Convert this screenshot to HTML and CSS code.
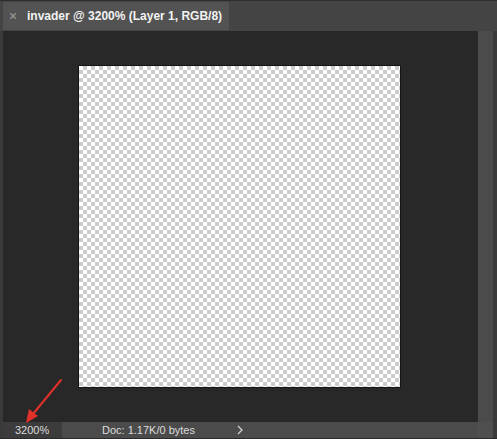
FILE: index.html
```html
<!DOCTYPE html>
<html>
<head>
<meta charset="utf-8">
<link rel="stylesheet" href="styles.css">
</head>
<body>
<div class="window">
  <div class="tabbar">
    <div class="tab">
      <span class="close">×</span>
      <span class="title">invader @ 3200% (Layer 1, RGB/8)</span>
    </div>
  </div>
  <div class="main">
    <div class="viewport">
      <div class="canvas"></div>
    </div>
    <div class="vscroll"></div>
  </div>
  <div class="statusbar">
    <div class="zoomfield">3200%</div>
    <div class="docinfo">
      <span class="doc">Doc: 1.17K/0 bytes</span>
      <svg class="more" width="6" height="10" viewBox="0 0 6 10"><polyline points="1,1 5,5 1,9" fill="none" stroke="#d0d0d0" stroke-width="1.3"/></svg>
    </div>
    <div class="corner"></div>
  </div>
  <svg class="arrow" width="80" height="60" viewBox="0 0 80 60">
    <line x1="61" y1="3" x2="33" y2="37" stroke="#e2302a" stroke-width="2" stroke-linecap="round"/>
    <polygon points="26,46 29,32 38,39" fill="#e2302a"/>
  </svg>
</div>
</body>
</html>
```
FILE: styles.css
```css
html, body {
  margin: 0;
  padding: 0;
  background: #2e2e2e;
}
.window {
  position: relative;
  width: 497px;
  height: 439px;
  display: flex;
  flex-direction: column;
  background: #333;
  font-family: "Liberation Sans", Arial, sans-serif;
  overflow: hidden;
}
.tabbar {
  height: 29px;
  border-top: 1px solid #2f2f2f;
  background: #444;
  padding-left: 3px;
  padding-top: 1px;
  box-sizing: content-box;
  display: flex;
  flex: none;
}
.tab {
  width: 226px;
  height: 28px;
  background: #535353;
  display: flex;
  align-items: center;
  color: #fff;
}
.close {
  width: 10px;
  margin-left: 6px;
  font-size: 14px;
  color: #a0a0a0;
  line-height: 1;
}
.title {
  margin-left: 8px;
  font-size: 12px;
  font-weight: bold;
  color: #f2f2f2;
  white-space: nowrap;
}
.main {
  flex: 1;
  display: flex;
  padding-left: 3px;
  padding-right: 4px;
  background: #3a3a3a;
  min-height: 0;
}
.viewport {
  flex: 1;
  background: #282828;
  display: flex;
  align-items: center;
  justify-content: center;
}
.canvas {
  width: 321px;
  height: 321px;
  background-color: #fff;
  background-image:
    linear-gradient(45deg, #cccccc 25%, transparent 25%, transparent 75%, #cccccc 75%),
    linear-gradient(45deg, #cccccc 25%, transparent 25%, transparent 75%, #cccccc 75%);
  background-size: 8px 8px;
  background-position: 0 0, 4px 4px;
  box-shadow: 0 0 0 1px #141414;
  margin-left: -1px;
}
.vscroll {
  width: 16px;
  background: #4b4b4b;
  border-left: 1px solid #2a2a2a;
  box-sizing: border-box;
}
.statusbar {
  height: 16px;
  flex: none;
  display: flex;
  padding-left: 3px;
  padding-right: 4px;
  border-bottom: 1px solid #2a2a2a;
  background: #3a3a3a;
  font-size: 11px;
  color: #dcdcdc;
}
.zoomfield {
  width: 59px;
  background: #3c3c3c;
  display: flex;
  align-items: center;
  padding-left: 12px;
  box-sizing: border-box;
}
.docinfo {
  flex: 1;
  background: #4b4b4b;
  display: flex;
  align-items: center;
}
.doc {
  margin-left: 40px;
}
.more {
  margin-left: 42px;
  display: block;
}
.corner {
  width: 16px;
  background: #4f4f4f;
}
.arrow {
  position: absolute;
  left: 0;
  top: 377px;
}
```
